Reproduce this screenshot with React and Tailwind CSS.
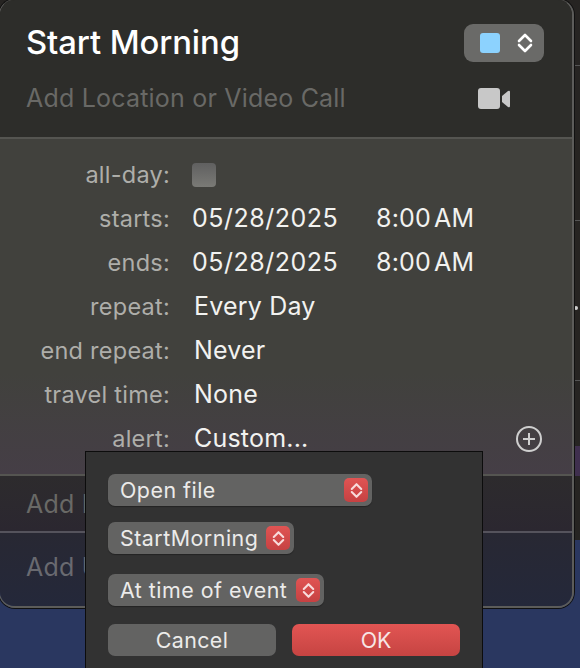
const font = { fontFamily: '"Inter", "Liberation Sans", sans-serif' };

function Updown({ className = "" }) {
  return (
    <svg viewBox="0 0 16 24" className={className} fill="none" stroke="currentColor" strokeWidth="2.6" strokeLinecap="round" strokeLinejoin="round">
      <path d="M2 10 L8 4 L14 10" />
      <path d="M2 14 L8 20 L14 14" />
    </svg>
  );
}

function Row({ label, children }) {
  return (
    <div className="flex h-[44px] items-center pt-[1px]">
      <div className="w-[170px] text-right text-[23.5px] tracking-[0.25px] text-[#aeaeaa]">{label}</div>
      <div className="ml-[21px] flex flex-1 items-center text-[25px] tracking-[0.2px] text-[#f2f2f0]">{children}</div>
    </div>
  );
}

function DateRow({ label }) {
  return (
    <Row label={label}>
      <span className="ml-[1px] w-[184px] tracking-[0.5px]">05/28/2025</span>
      <span>8:00</span>
      <span className="ml-[3px]">AM</span>
    </Row>
  );
}

function Select({ label, className = "" }) {
  return (
    <div className={`flex h-[32px] items-center justify-between rounded-[7px] bg-[#636362] pl-[12px] pr-[4px] text-[21.4px] tracking-[0.5px] text-[#ecebea] shadow-[0_1px_1px_rgba(0,0,0,0.3)] ${className}`}>
      <span>{label}</span>
      <span className="flex h-[24px] w-[24px] items-center justify-center rounded-[5px] bg-gradient-to-b from-[#e05453] to-[#c64142] text-[#f8dcdc]">
        <Updown className="h-[19px] w-[13px]" />
      </span>
    </div>
  );
}

export default function App() {
  return (
    <div style={font} className="relative h-[668px] w-[580px] overflow-hidden bg-[#2a3760]">
      <div className="relative flex h-[540px] bg-[#262422]">
        <div className="ml-auto mt-[446px] h-[30px] w-[6px] bg-[#3f2f4e]" />
        <div className="absolute right-[2px] top-[306px] h-[4px] w-[4px] rounded-full bg-[#cfcfcf]" />
        <div className="absolute right-0 top-[65px] h-[1px] w-[6px] bg-[#555]" />
        <div className="absolute right-0 top-[220px] h-[1px] w-[6px] bg-[#555]" />
        <div className="absolute right-0 top-[380px] h-[1px] w-[6px] bg-[#555]" />
      </div>

      <div className="absolute left-[-1px] top-[-1px] w-[575px] overflow-hidden rounded-[16px] border border-r-2 border-b-2 border-[#5c5c5a] border-t-[#454543] shadow-[0_0_0_1px_#111]">
        <div className="flex h-[137px] flex-col bg-[#2d2d2a] pl-[26px] pr-[28px] pt-[23px]">
          <div className="flex h-[40px] items-center justify-between">
            <span className="text-[32.8px] font-medium tracking-[-0.1px] text-white">Start Morning</span>
            <div className="flex h-[38px] w-[80px] items-center rounded-[9px] bg-[#6a6a68] pl-[16px]">
              <div className="h-[20px] w-[20px] rounded-[3px] bg-[#8cd2fe]" />
              <Updown className="ml-[17px] h-[24px] w-[16px] text-white" />
            </div>
          </div>
          <div className="mt-[17px] flex items-center justify-between">
            <span className="text-[25px] tracking-[0.2px] text-[#696966]">Add Location or Video Call</span>
            <svg viewBox="0 0 32 22" className="mr-[34px] h-[22px] w-[32px]" fill="#c8c8c8">
              <rect x="0" y="0" width="22" height="21" rx="3" />
              <path d="M24 8 L30 3 Q32 2 32 4 V18 Q32 20 30 19 L24 14 Z" />
            </svg>
          </div>
        </div>

        <div className="h-[339px] border-y-2 border-[#555551] bg-gradient-to-b from-[#41413d] via-[#41413d] via-70% to-[#453e46] pt-[13px]">
          <Row label="all-day:">
            <div className="ml-[1px] h-[24px] w-[24px] rounded-[4px] bg-gradient-to-b from-[#606060] to-[#7a7a76]" />
          </Row>
          <DateRow label="starts:" />
          <DateRow label="ends:" />
          <Row label="repeat:"><span className="ml-[3px]">Every Day</span></Row>
          <Row label="end repeat:"><span className="ml-[3px]">Never</span></Row>
          <Row label="travel time:"><span className="ml-[3px]">None</span></Row>
          <Row label="alert:">
            <span className="ml-[3px]">Custom...</span>
            <svg viewBox="0 0 26 26" className="ml-auto mr-[30px] h-[26px] w-[26px]" fill="none" stroke="#cfcfcf" strokeWidth="2">
              <circle cx="13" cy="13" r="12" />
              <path d="M13 7 V19 M7 13 H19" />
            </svg>
          </Row>
        </div>

        <div className="h-[57px] border-b-2 border-[#55535c] bg-gradient-to-b from-[#2d2b2d] to-[#2b2730] pl-[26px] pt-[10px] text-[25px] tracking-[0.2px] text-[#696966]">Add Notes</div>
        <div className="h-[73px] bg-gradient-to-b from-[#282833] to-[#24283a] pl-[26px] pt-[16px] text-[25px] tracking-[0.2px] text-[#696a70]">Add URL</div>
      </div>

      <div className="absolute left-[85px] top-[451px] flex h-[230px] w-[398px] flex-col border border-[#0c0c0c] bg-[#323232] pl-[22px]">
        <Select label="Open file" className="mt-[22px] w-[264px]" />
        <Select label="StartMorning" className="mt-[16px] w-[186px]" />
        <Select label="At time of event" className="mt-[20px] w-[216px]" />
        <div className="mt-[18px] flex gap-[16px] text-[21.4px]">
          <button className="h-[32px] w-[168px] rounded-[7px] bg-[#636362] tracking-[0.4px] text-[#ecebea]">Cancel</button>
          <button className="h-[32px] w-[168px] rounded-[7px] bg-gradient-to-b from-[#e25553] to-[#c64442] text-[#f7e6e6]">OK</button>
        </div>
      </div>
    </div>
  );
}
